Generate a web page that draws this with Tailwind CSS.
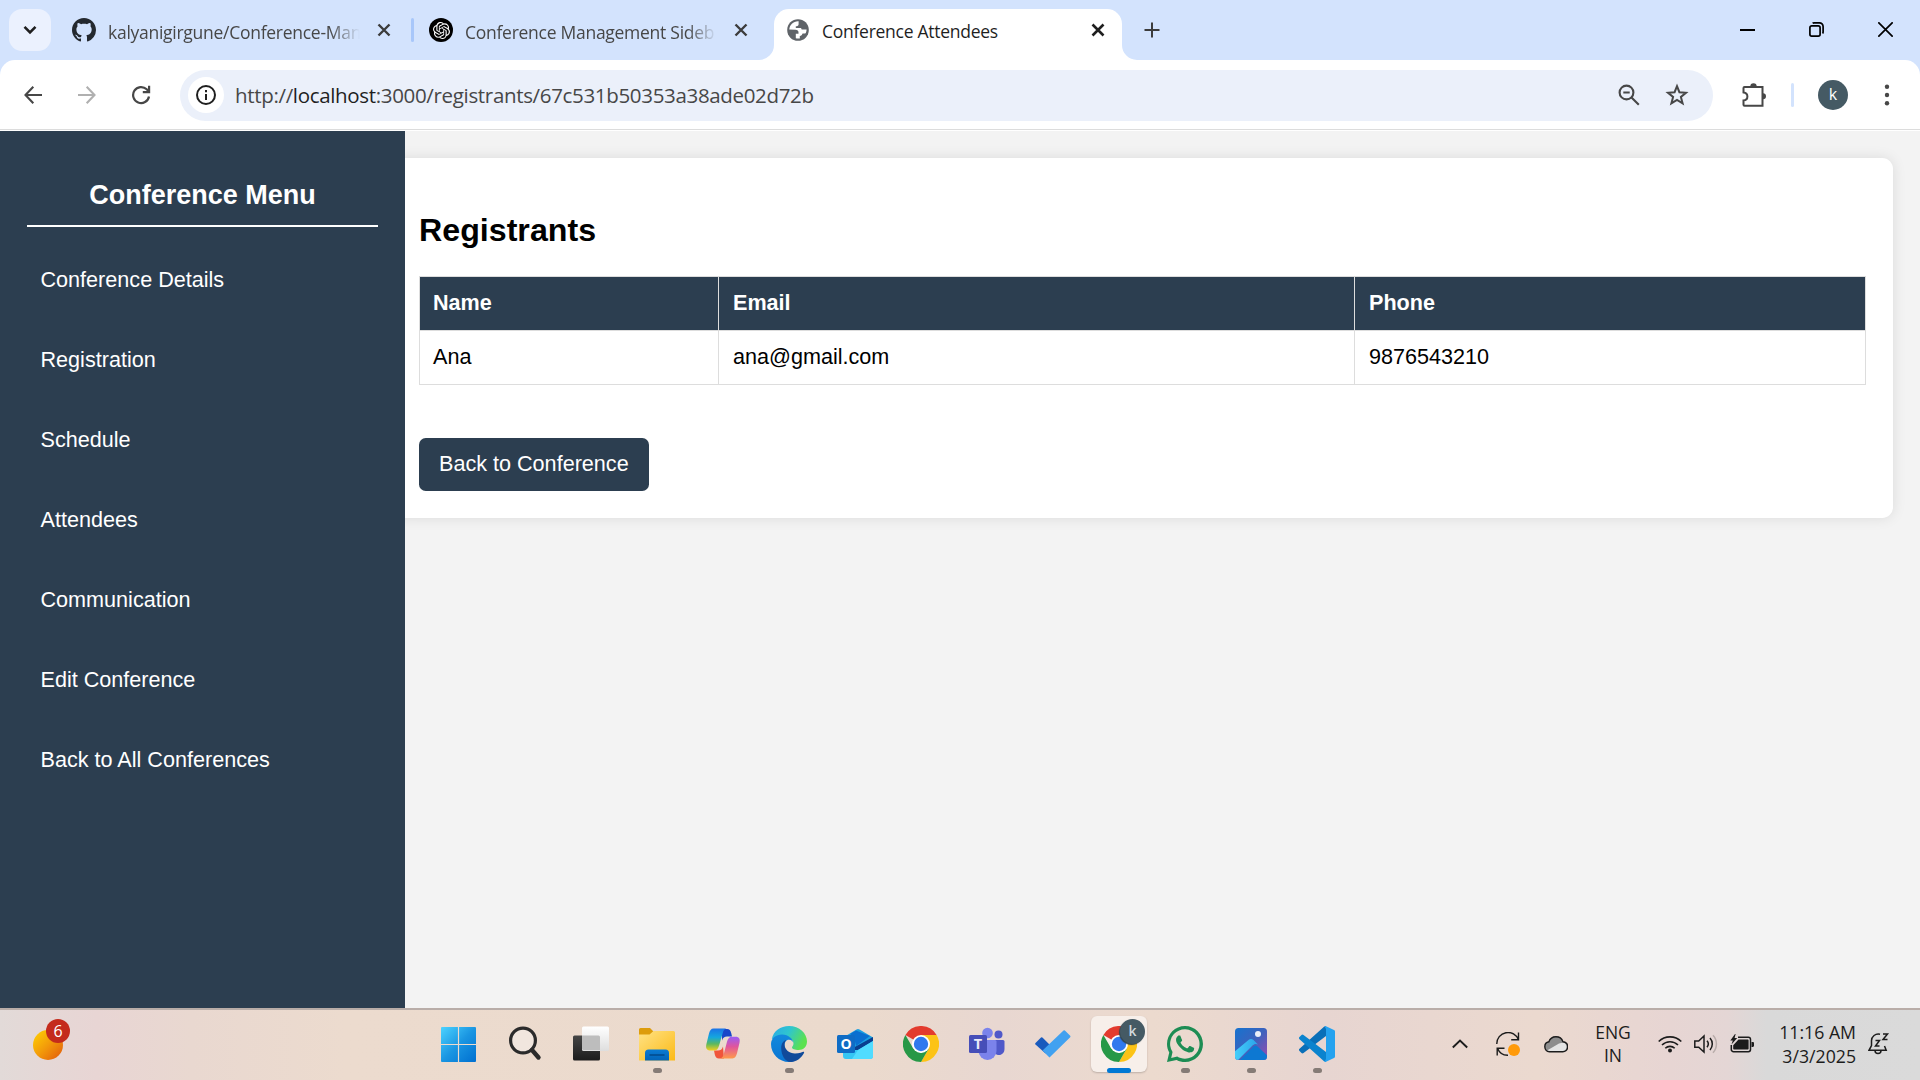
<!DOCTYPE html>
<html lang="en">
<head>
<meta charset="utf-8">
<title>Conference Attendees</title>
<script src="https://cdn.jsdelivr.net/npm/@tailwindcss/browser@4"></script>
</head>
<body class="w-[1920px] h-[1080px] overflow-hidden bg-[#f3f3f3] flex flex-col font-['Open_Sans',sans-serif]">

<!-- Tab strip -->
<header class="h-[60px] shrink-0 bg-[#d3e3fd] flex items-center pl-[9px] text-[17.500px] tracking-[-0.270px] text-[#474747]">
  <button class="w-[42px] h-[42px] rounded-[13px] bg-[#ebf1fe] grid place-items-center">
    <svg class="w-[14px] h-[10px]" viewBox="0 0 14 10" fill="none" stroke="#1f1f1f" stroke-width="2.6"><path d="M1.5 1.8 7 7.3l5.500-5.500"/></svg>
  </button>
  <svg class="w-6 h-6 ml-[21px]" viewBox="0 0 16 16" fill="#24292f"><path d="M8 0C3.580 0 0 3.580 0 8c0 3.540 2.290 6.530 5.470 7.590.4.070.550-.170.550-.380 0-.190-.010-.820-.010-1.490-2.010.370-2.530-.490-2.690-.940-.090-.230-.480-.940-.820-1.130-.280-.150-.680-.520-.010-.530.630-.010 1.080.580 1.230.820.720 1.210 1.870.870 2.330.660.070-.520.280-.870.510-1.070-1.780-.2-3.640-.890-3.640-3.950 0-.870.310-1.590.820-2.150-.080-.2-.360-1.020.080-2.120 0 0 .670-.210 2.200.820.640-.180 1.320-.270 2-.270s1.360.090 2 .270c1.530-1.040 2.200-.820 2.200-.820.440 1.100.160 1.920.080 2.120.510.560.820 1.270.820 2.150 0 3.070-1.870 3.750-3.650 3.950.290.250.540.730.540 1.480 0 1.070-.010 1.930-.010 2.200 0 .210.150.460.550.380A8.010 8.010 0 0 0 16 8c0-4.420-3.580-8-8-8z"/></svg>
  <span class="ml-3 w-[252px] h-[28px] leading-[28px] mt-[3px] overflow-hidden whitespace-nowrap mask-r-from-88% mask-r-to-100%">kalyanigirgune/Conference-Man</span>
  <svg class="w-[14px] h-[14px] ml-[17px]" viewBox="0 0 14 14" stroke="#3c3c3c" stroke-width="2.400"><path d="M1.500 1.500l11 11M12.500 1.500l-11 11"/></svg>
  <i class="w-[3px] h-6 ml-5 bg-[#a8c7fa] rounded-sm"></i>
  <span class="w-6 h-6 ml-[15px] rounded-full bg-black grid place-items-center">
    <svg class="w-[17px] h-[17px]" viewBox="0 0 24 24" fill="#fff"><path d="M22.2819 9.8211a5.9847 5.9847 0 0 0-.5157-4.9108 6.0462 6.0462 0 0 0-6.5098-2.9A6.0651 6.0651 0 0 0 4.9807 4.1818a5.9847 5.9847 0 0 0-3.9977 2.9 6.0462 6.0462 0 0 0 .7427 7.0966 5.98 5.98 0 0 0 .511 4.9107 6.051 6.051 0 0 0 6.5146 2.9001A5.9847 5.9847 0 0 0 13.2599 24a6.0557 6.0557 0 0 0 5.7718-4.2058 5.9894 5.9894 0 0 0 3.9977-2.9001 6.0557 6.0557 0 0 0-.7475-7.0729zm-9.022 12.6081a4.4755 4.4755 0 0 1-2.8764-1.0408l.1419-.0804 4.7783-2.7582a.7948.7948 0 0 0 .3927-.6813v-6.7369l2.02 1.1686a.071.071 0 0 1 .038.052v5.5826a4.504 4.504 0 0 1-4.4945 4.4944zm-9.6607-4.1254a4.4708 4.4708 0 0 1-.5346-3.0137l.142.0852 4.783 2.7582a.7712.7712 0 0 0 .7806 0l5.8428-3.3685v2.3324a.0804.0804 0 0 1-.0332.0615L9.74 19.9502a4.4992 4.4992 0 0 1-6.1408-1.6464zM2.3408 7.8956a4.485 4.485 0 0 1 2.3655-1.9728V11.6a.7664.7664 0 0 0 .3879.6765l5.8144 3.3543-2.0201 1.1685a.0757.0757 0 0 1-.071 0l-4.8303-2.7865A4.504 4.504 0 0 1 2.3408 7.872zm16.5963 3.8558L13.1038 8.364 15.1192 7.2a.0757.0757 0 0 1 .071 0l4.8303 2.7913a4.4944 4.4944 0 0 1-.6765 8.1042v-5.6772a.79.79 0 0 0-.407-.667zm2.0107-3.0231l-.142-.0852-4.7735-2.7818a.7759.7759 0 0 0-.7854 0L9.409 9.2297V6.8974a.0662.0662 0 0 1 .0284-.0615l4.8303-2.7866a4.4992 4.4992 0 0 1 6.6802 4.66zM8.3065 12.863l-2.02-1.1638a.0804.0804 0 0 1-.038-.0567V6.0742a4.4992 4.4992 0 0 1 7.3757-3.4537l-.142.0805L8.704 5.459a.7948.7948 0 0 0-.3927.6813zm1.0976-2.3654l2.602-1.4998 2.6069 1.4998v2.9994l-2.5974 1.4997-2.6067-1.4997Z"/></svg>
  </span>
  <span class="ml-3 w-[252px] h-[28px] leading-[28px] mt-[3px] overflow-hidden whitespace-nowrap mask-r-from-88% mask-r-to-100%">Conference Management Sideb</span>
  <svg class="w-[14px] h-[14px] ml-[17px]" viewBox="0 0 14 14" stroke="#3c3c3c" stroke-width="2.400"><path d="M1.500 1.500l11 11M12.500 1.500l-11 11"/></svg>
  <svg class="w-[15px] h-[15px] ml-[11px] self-end" viewBox="0 0 15 15" fill="#fff"><path d="M15 0v15H0A15 15 0 0 0 15 0z"/></svg>
  <div class="w-[348px] h-[51px] self-end bg-white rounded-t-[15px] flex items-center pl-3 pb-[9px] text-[#1f1f1f]">
    <svg class="w-6 h-6" viewBox="0 0 24 24"><circle cx="12" cy="12" r="10.800" fill="#5f6368"/><path fill="#fff" d="M12.600 3.300C7.500 3 3.500 6.900 3.300 11.600l6.200.1c1.900 0 3 1 3 2.700v1.300h-2.700v4.600c1 .3 2.700.4 4 .1v-2.500c1.500 0 2.300-.8 2.500-2.200 1-.3 1.800-.2 3.400-.5.6-1.300.9-2.500.9-3.600h-3.900c-1.200 0-1.500-.7-1.500-1.700H9.800V8.200c1.500.1 2.700-.5 2.800-2z"/></svg>
    <span class="ml-3 w-[262px] mt-[3px] whitespace-nowrap">Conference Attendees</span>
    <svg class="w-[14px] h-[14px] ml-[7px]" viewBox="0 0 14 14" stroke="#1f1f1f" stroke-width="2.600"><path d="M1.500 1.500l11 11M12.500 1.500l-11 11"/></svg>
  </div>
  <svg class="w-[15px] h-[15px] self-end" viewBox="0 0 15 15" fill="#fff"><path d="M0 0v15h15A15 15 0 0 1 0 0z"/></svg>
  <svg class="w-4 h-4 ml-[7px]" viewBox="0 0 16 16" stroke="#3c3c3c" stroke-width="2"><path d="M8 .5v15M.5 8h15"/></svg>
  <div class="ml-auto flex items-center gap-[54px] pr-[27px] pb-[1px]">
    <i class="w-[15px] h-[2px] bg-black"></i>
    <svg class="w-[15px] h-[15px]" viewBox="0 0 15 15" fill="none" stroke="#000" stroke-width="1.700"><rect x=".9" y="3.900" width="10.200" height="10.200" rx="1.800"/><path d="M3.600 1.300C4 1 4.500.9 5 .9h5.500a3.600 3.600 0 0 1 3.600 3.600V10c0 .5-.2 1-.5 1.400"/></svg>
    <svg class="w-[15px] h-[15px]" viewBox="0 0 15 15" stroke="#000" stroke-width="1.700"><path d="M.3.300l14.400 14.400M14.700.3L.3 14.700"/></svg>
  </div>
</header>

<!-- Toolbar -->
<div class="h-[71px] shrink-0 bg-[#d3e3fd]">
  <div class="h-full bg-white rounded-t-[15px] flex items-center pb-[1px] relative">
    <svg class="w-[18px] h-[18px] ml-6" viewBox="0 0 18 18" fill="none" stroke="#474747" stroke-width="2.100"><path d="M9.300.8 1.500 9l7.800 8.200M1.500 9H18"/></svg>
    <svg class="w-[18px] h-[18px] ml-9" viewBox="0 0 18 18" fill="none" stroke="#b0b0b0" stroke-width="2.100"><path d="M8.700.8 16.500 9l-7.800 8.200M16.500 9H0"/></svg>
    <svg class="w-[20px] h-[20px] ml-[35px]" viewBox="0 0 20 20" fill="none" stroke="#474747" stroke-width="2.200"><path d="M18 11.500A8 8 0 1 1 15.700 4.300L18 6.600M18.100.8v6.300h-6.300"/></svg>
    <div class="ml-[29px] w-[1533px] h-[51px] rounded-full bg-[#ebf0fa] flex items-center pl-2">
      <span class="w-9 h-9 rounded-full bg-white grid place-items-center">
        <svg class="w-5 h-5" viewBox="0 0 20 20" fill="none" stroke="#1f1f1f" stroke-width="2"><circle cx="10" cy="10" r="9"/><path d="M10 9v6M10 5v2.200"/></svg>
      </span>
      <span class="ml-[11px] text-[20.500px] tracking-[-0.330px] text-[#474747] whitespace-nowrap">http://<span class="text-[#1f1f1f]">localhost</span>:3000/registrants/67c531b50353a38ade02d72b</span>
      <svg class="w-[22px] h-[22px] ml-auto" viewBox="0 0 22 22" fill="none" stroke="#474747" stroke-width="2.100"><circle cx="8.500" cy="8.500" r="6.900"/><path d="M13.500 13.500l7.300 7.300M5.300 8.500h6.400"/></svg>
      <svg class="w-6 h-6 ml-[25px] mr-6" viewBox="0 0 24 24" fill="none" stroke="#474747" stroke-width="2"><path d="M12 3.200l2.400 6 6.600.5-5.100 4.200 1.700 6.500L12 16.900l-5.600 3.500 1.700-6.500L3 9.700l6.600-.5z"/></svg>
    </div>
    <svg class="w-[26px] h-[26px] ml-[28px]" viewBox="0 0 26 26" fill="none" stroke="#474747" stroke-width="2"><path d="M3.500 5h18v18.700h-18a1 1 0 0 1-1-1v-4.300c2.300-.2 3.900-1.700 3.900-4s-1.600-3.800-3.900-4V6a1 1 0 0 1 1-1z"/><path fill="#474747" stroke="none" d="M9.300 4.500a3.200 3.200 0 0 1 6.400 0zM22 11.300a3 3 0 0 1 0 6z"/></svg>
    <i class="w-[3px] h-6 ml-[24px] bg-[#d3e3fd] rounded-sm"></i>
    <span class="w-[30px] h-[30px] ml-6 rounded-full bg-[#455a64] text-white text-[16px] leading-[29px] text-center">k</span>
    <svg class="w-[6px] h-[22px] ml-9" viewBox="0 0 6 22" fill="#474747"><circle cx="3" cy="2.700" r="2.200"/><circle cx="3" cy="11" r="2.200"/><circle cx="3" cy="19.300" r="2.200"/></svg>
    <i class="absolute left-0 bottom-[1px] w-full h-[1px] bg-[#dcdcdc]"></i>
  </div>
</div>

<!-- Page -->
<div class="h-[877px] shrink-0 flex overflow-hidden font-['Liberation_Sans',Arial,sans-serif]">
  <aside class="w-[405px] shrink-0 bg-[#2c3e50] text-white px-[27px] relative z-10">
    <h2 class="mt-[46px] h-[50px] leading-[36px] border-b-2 border-white text-center text-[27px] font-bold">Conference Menu</h2>
    <nav class="mt-[13px] flex flex-col pl-[13.500px] text-[21.600px]">
      <a class="h-20 leading-[80px]">Conference Details</a>
      <a class="h-20 leading-[80px]">Registration</a>
      <a class="h-20 leading-[80px]">Schedule</a>
      <a class="h-20 leading-[80px]">Attendees</a>
      <a class="h-20 leading-[80px]">Communication</a>
      <a class="h-20 leading-[80px]">Edit Conference</a>
      <a class="h-20 leading-[80px]">Back to All Conferences</a>
    </nav>
  </aside>
  <main class="w-[1501px] h-[360px] -ml-[13px] mt-[27px] pl-[27px] bg-white rounded-[10.800px] shadow-[0_0_13.500px_rgba(0,0,0,0.1)]">
    <h2 class="mt-[54px] leading-[37px] text-[32.200px] font-bold text-black">Registrants</h2>
    <table class="mt-[27px] w-[1447px] table-fixed border-collapse text-[21.600px] text-black text-left">
      <colgroup><col class="w-[299px]"><col class="w-[636px]"><col></colgroup>
      <tr class="h-[54px] bg-[#2c3e50] text-white">
        <th class="border border-[#ddd] px-[13px]">Name</th><th class="border border-[#ddd] px-[14px]">Email</th><th class="border border-[#ddd] px-[14px]">Phone</th>
      </tr>
      <tr class="h-[54px]">
        <td class="border border-[#ddd] px-[13px]">Ana</td><td class="border border-[#ddd] px-[14px]">ana@gmail.com</td><td class="border border-[#ddd] px-[14px]">9876543210</td>
      </tr>
    </table>
    <a class="mt-[53px] inline-block h-[53px] leading-[51px] px-[20px] rounded-[6.750px] bg-[#2c3e50] text-white text-[21.600px]">Back to Conference</a>
  </main>
</div>

<!-- Taskbar -->
<footer class="h-[72px] shrink-0 border-t-2 border-[#b9ada8] flex items-center text-[#1c1c1c] bg-[linear-gradient(90deg,#e2dad8_0%,#e8d5d4_5%,#e9d8d0_10%,#ecdbce_18%,#ebdacd_45%,#e8d7d1_52%,#ecdace_60%,#e7d5d1_69%,#ebd9cf_80%,#e7d5d3_87%,#e4d6d5_90%,#d9d9d9_92%,#dadada_100%)]">
  <div class="w-[41px] h-[44px] ml-[33px] -mt-[15px] relative">
    <i class="absolute left-0 top-[14px] w-[30px] h-[30px] rounded-full bg-linear-135 from-[#ffd400] via-[#f29a0a] to-[#e0540c]"></i>
    <b class="absolute left-[13px] top-[3px] w-6 h-6 rounded-full bg-[#c42b1c] text-white text-[16px] font-normal leading-[24px] text-center">6</b>
  </div>
  <div class="ml-[352px] flex h-[70px]">
    <div class="w-[66px] flex items-center justify-center pb-[1px] pr-[2px]">
      <svg class="w-[35px] h-[35px]" viewBox="0 0 36 36"><defs><linearGradient id="win" x1="0" y1="0" x2="1" y2="1"><stop offset="0" stop-color="#4cd3ff"/><stop offset=".5" stop-color="#1a96e2"/><stop offset="1" stop-color="#006fd0"/></linearGradient></defs><path fill="url(#win)" d="M1 0h16.400v17.400H0V1a1 1 0 0 1 1-1zM18.600 0H35a1 1 0 0 1 1 1v16.400H18.600zM0 18.600h17.400V36H1a1 1 0 0 1-1-1zM18.600 18.600H36V35a1 1 0 0 1-1 1H18.600z"/></svg>
    </div>
    <div class="w-[66px] flex items-center justify-center pb-[2px] pr-[2px]">
      <svg class="w-9 h-9" viewBox="0 0 36 36" fill="#f1e6de" stroke="#2b2b2b"><circle cx="17" cy="14.500" r="12.400" stroke-width="3.200"/><path d="M26 24l6.500 7.500" stroke-width="4.400" stroke-linecap="round"/></svg>
    </div>
    <div class="w-[66px] flex items-center justify-center pb-[2px]">
      <svg class="w-9 h-9" viewBox="0 0 36 36"><defs><linearGradient id="tv" x2="0" y2="1"><stop stop-color="#454545"/><stop offset="1" stop-color="#1c1c1c"/></linearGradient><linearGradient id="tw" x2="0" y2="1"><stop stop-color="#fff"/><stop offset="1" stop-color="#dedede"/></linearGradient></defs><rect y="9.500" width="27" height="25" rx="1.500" fill="url(#tv)"/><rect x="9" y=".5" width="27" height="24.500" rx="1.500" fill="url(#tw)"/><path d="M9 9.500h16.500a1.500 1.500 0 0 1 1.500 1.500v13H10.500A1.500 1.500 0 0 1 9 22.500z" fill="#bdbdbd"/></svg>
    </div>
    <div class="w-[66px] flex flex-col items-center pt-[17px]">
      <svg class="w-9 h-9" viewBox="0 0 36 36"><defs><linearGradient id="fe" x2="1" y2="1"><stop stop-color="#ffe285"/><stop offset="1" stop-color="#fcba16"/></linearGradient><linearGradient id="fb" x2="0" y2="1"><stop stop-color="#0b7bd3"/><stop offset="1" stop-color="#0364b8"/></linearGradient></defs><path fill="#dd9c0b" d="M0 2.500A1.500 1.500 0 0 1 1.500 1H11l3.500 3.500L11 9H0z"/><path fill="url(#fe)" d="M0 7.500h10.500l4-3.500H34.500A1.500 1.500 0 0 1 36 5.500V33.500H0z"/><path fill="url(#fb)" d="M6 33.500V26a3.500 3.500 0 0 1 3.500-3.500h17A3.500 3.500 0 0 1 30 26v7.500z"/><path stroke="#034c8f" stroke-width="1.600" d="M10.500 28h15"/></svg>
      <i class="mt-[5px] w-[9px] h-[5px] rounded-full bg-[#857b76]"></i>
    </div>
    <div class="w-[66px] flex items-center justify-center pb-[2px]">
      <svg class="w-9 h-9" viewBox="0 0 36 36"><defs><linearGradient id="c1" x2="0" y2="1"><stop stop-color="#1b72e8"/><stop offset=".4" stop-color="#14a7de"/><stop offset=".7" stop-color="#5cb85f"/><stop offset="1" stop-color="#f3cf1d"/></linearGradient><linearGradient id="c2" x2="0" y2="1"><stop stop-color="#9a5cf5"/><stop offset=".45" stop-color="#e0559c"/><stop offset="1" stop-color="#ff9a4a"/></linearGradient></defs><path fill="#1846c9" d="M17 3h5c2.500 0 3.500 1.500 4.200 4l.8 3.500h-5c-2.500 0-4 1-5 4z"/><path fill="#f0553b" d="M19 32.500h-5c-2.500 0-3.500-1.500-4.200-4L9 24.500h4c2.500 0 4-1 5-4z"/><path fill="url(#c1)" d="M8.500 2.500h12.800c-2.300.5-3 2.500-3.800 5.200l-3.400 11.800c-.9 3-2 5-5 5H5.500C1.500 24.500.600 22 1.300 18.500L4 7.500C4.800 4.500 6 2.500 8.500 2.500z"/><path fill="url(#c2)" d="M27.500 32.500H15.200c2.300-.5 3-2.500 3.800-5.200l3-11.500c.9-3 2-5 5-5h3.500c4 0 4.700 2.500 4 6l-2.500 10.500c-.800 3-2 5.200-4.500 5.200z"/></svg>
    </div>
    <div class="w-[66px] flex flex-col items-center pt-4">
      <svg class="w-9 h-9" viewBox="0 0 36 36"><defs><linearGradient id="e1" x2="1" y2=".4"><stop stop-color="#29a9e8"/><stop offset=".5" stop-color="#2fc5cf"/><stop offset="1" stop-color="#5ce14f"/></linearGradient><linearGradient id="e2" x2="0" y2="1"><stop stop-color="#1389dd"/><stop offset="1" stop-color="#0a75d2"/></linearGradient></defs><path fill="url(#e1)" d="M.8 13C2.500 5 9.500 0 18 0c10.500 0 18 7.500 18 15.500 0 5-3.500 8.500-8.500 8.500-3.500 0-6.500-1-6.500-2.500 0-1 1.500-1.500 1.500-4 0-4-4-6.500-8-7.500z"/><path fill="url(#e2)" d="M0 18C.2 12 5 8.500 11 8.500c6.500 0 11.500 4.500 11.500 9.500 0-2.500-2-4.200-4.500-4.200-3 0-4.500 2.700-4.500 6.200 0 6 4 13.500 9.500 15.200-1.500.5-3.500.8-5 .8C8 36 0 28 0 18z"/><path fill="#114a9a" d="M10.200 22c0-4 2-7.500 5-8-1.500 1.500-1.700 3.500-1.700 4.500 0 5 5 9 10.500 9 4.500 0 7.500-1.600 8.500-1.700.6 0 .8.500.5 1.200C30.500 32 25 36 20 36c-6 0-9.800-7-9.800-14z"/></svg>
      <i class="mt-[6px] w-[9px] h-[5px] rounded-full bg-[#857b76]"></i>
    </div>
    <div class="w-[66px] flex items-center justify-center pb-[2px]">
      <svg class="w-9 h-9" viewBox="0 0 36 36"><path fill="#1a9fe0" d="M7 11 19.500 3.500a3 3 0 0 1 3 0L36 11.500 20 23H7z"/><path fill="#0a6fd0" d="M13 8l6-3.500L33 10l-14 10-2-9z"/><path fill="#0a3f8f" d="M16 22 36 11v5L20 26z"/><path fill="#35c6f4" d="M36 15v15a3 3 0 0 1-3 3H9a3 3 0 0 1-3-3v-6h15z"/><path fill="#51dcff" d="M21 24l15-9v15a3 3 0 0 1-3 3H15z"/><rect y="9" width="18" height="18" rx="1.500" fill="#0f6cc5"/><text x="9" y="23" text-anchor="middle" font-size="14" font-weight="700" fill="#fff">O</text></svg>
    </div>
    <div class="w-[66px] flex items-center justify-center pb-[2px]">
      <svg class="w-9 h-9" viewBox="0 0 36 36"><g id="chrome"><path fill="#e33b2e" d="M18 18 2.400 9A18 18 0 0 1 33.600 9z"/><path fill="#fcc316" d="M18 9h15.600A18 18 0 0 1 18 36l7.800-13.500z"/><path fill="#279847" d="M2.400 9l7.800 13.500 7.800 4.500 7.800-4.500L18 36A18 18 0 0 1 2.400 9z"/><circle cx="18" cy="18" r="9" fill="#fff"/><circle cx="18" cy="18" r="7.200" fill="#3079ee"/></g></svg>
    </div>
    <div class="w-[66px] flex items-center justify-center pb-[2px]">
      <svg class="w-9 h-9" viewBox="0 0 36 36"><circle cx="29.500" cy="8.500" r="4" fill="#5059c9"/><path fill="#5059c9" d="M24 14h10a1.500 1.500 0 0 1 1.500 1.500V23c0 3.500-2.500 6-5.500 6-3.500 0-6-2.500-6-6z"/><circle cx="18.500" cy="7" r="5.300" fill="#7b83eb"/><path fill="#7b83eb" d="M11 14h15a1.500 1.500 0 0 1 1.500 1.500v9.500a9 9 0 0 1-18 0v-9.500A1.500 1.500 0 0 1 11 14z"/><rect y="9" width="18" height="18" rx="1.500" fill="#464eb8"/><text x="9" y="23.200" text-anchor="middle" font-size="14.500" font-weight="700" fill="#e9eaf8">T</text></svg>
    </div>
    <div class="w-[66px] flex items-center justify-center pb-[2px]">
      <svg class="w-9 h-9" viewBox="0 0 36 36"><path fill="#195abd" d="M.5 17 6 11.500a1 1 0 0 1 1.400 0L16 20l-5.500 7.500L.5 18.400a1 1 0 0 1 0-1.400z"/><path fill="#41a1f0" d="M28.500 4.500a1 1 0 0 1 1.400 0l5.300 5.300a1 1 0 0 1 0 1.400L14.500 31.500 7.500 24.500z"/></svg>
    </div>
    <div class="w-[66px] h-full flex justify-center">
      <div class="w-14 h-14 mt-[6px] rounded-md bg-[#f7efea] shadow-[0_1px_2px_rgba(0,0,0,0.2)] flex flex-col items-center pt-[10px] relative">
        <svg class="w-9 h-9 shrink-0" viewBox="0 0 36 36"><use href="#chrome"/></svg>
        <i class="mt-[6px] w-6 h-[5px] shrink-0 rounded-full bg-[#0078d4]"></i>
        <b class="absolute left-[29px] top-[3px] w-[25px] h-[25px] rounded-full bg-[#455a64] shadow-[-1px_1px_1px_#34454d] text-[#d3dade] text-[14px] font-semibold leading-[24px] text-center">k</b>
      </div>
    </div>
    <div class="w-[66px] flex flex-col items-center pt-4">
      <svg class="w-9 h-9" viewBox="0 0 24 24" fill="#1d8d54"><path d="M17.472 14.382c-.297-.149-1.758-.867-2.030-.967-.273-.099-.471-.148-.670.150-.197.297-.767.966-.940 1.164-.173.199-.347.223-.644.075-.297-.150-1.255-.463-2.390-1.475-.883-.788-1.480-1.761-1.653-2.059-.173-.297-.018-.458.130-.606.134-.133.298-.347.446-.520.149-.174.198-.298.298-.497.099-.198.050-.371-.025-.520-.075-.149-.669-1.612-.916-2.207-.242-.579-.487-.500-.669-.510-.173-.008-.371-.010-.570-.010-.198 0-.520.074-.792.372-.272.297-1.040 1.016-1.040 2.479 0 1.462 1.065 2.875 1.213 3.074.149.198 2.096 3.200 5.077 4.487.709.306 1.262.489 1.694.625.712.227 1.360.195 1.871.118.571-.085 1.758-.719 2.006-1.413.248-.694.248-1.289.173-1.413-.074-.124-.272-.198-.570-.347zM12 0C5.400 0 0 5.400 0 12c0 2.100.500 4 1.500 5.700L0 24l6.400-1.400C8.100 23.500 10 24 12 24c6.600 0 12-5.400 12-12S18.600 0 12 0zm0 21.800c-1.900 0-3.700-.500-5.200-1.400l-4 .9.900-3.900A9.800 9.800 0 1 1 12 21.800z"/></svg>
      <i class="mt-[6px] w-[9px] h-[5px] rounded-full bg-[#857b76]"></i>
    </div>
    <div class="w-[66px] flex flex-col items-center pt-4">
      <svg class="w-9 h-9" viewBox="0 0 36 36"><defs><linearGradient id="p1" x2="1" y2="1"><stop stop-color="#1673cf"/><stop offset=".5" stop-color="#3d62bd"/><stop offset="1" stop-color="#9b4bb0"/></linearGradient><linearGradient id="p2" x2="1"><stop stop-color="#47d2fb"/><stop offset="1" stop-color="#2aa3ea"/></linearGradient><clipPath id="pc"><rect x="2" y="2" width="32" height="32" rx="3.500"/></clipPath></defs><g clip-path="url(#pc)"><path fill="url(#p1)" d="M2 2h32v32H2z"/><path fill="#0d78d2" d="M5 36 21 20a3 3 0 0 1 3 0l12 11v5z"/><path fill="url(#p2)" d="M0 27 15.500 14a4 4 0 0 1 5 0l4.500 4.500c-2-1-4-.5-5.500 1L5 34H0z"/></g><circle cx="25" cy="8" r="3" fill="#e9eef8"/></svg>
      <i class="mt-[6px] w-[9px] h-[5px] rounded-full bg-[#857b76]"></i>
    </div>
    <div class="w-[66px] flex flex-col items-center pt-4">
      <svg class="w-9 h-9" viewBox="0 0 36 36"><path fill="#0a6fb8" d="M27 0v10L4.500 27a1.500 1.500 0 0 1-2 0L.5 25a1.500 1.500 0 0 1 0-2.200L25 .8z"/><path fill="#0b83ce" d="M27 36V26L4.500 9a1.500 1.500 0 0 0-2 0L.5 11a1.500 1.500 0 0 0 0 2.200L25 35.200z"/><path fill="#25a2ef" d="M25.500 35.700 27 33V3L25.500.300a1.500 1.500 0 0 1 1.500 0L35 4a1.500 1.500 0 0 1 1 1.400v25.200a1.500 1.500 0 0 1-1 1.400l-8 3.700a1.500 1.500 0 0 1-1.500 0z"/></svg>
      <i class="mt-[6px] w-[9px] h-[5px] rounded-full bg-[#857b76]"></i>
    </div>
  </div>

  <div class="ml-[102px] flex items-center h-[70px] pb-[2px]">
    <svg class="w-4 h-[10px]" viewBox="0 0 16 10" fill="none" stroke="#1c1c1c" stroke-width="1.900"><path d="M.8 8.500 8 1.500l7.200 7"/></svg>
    <svg class="w-6 h-6 ml-7" viewBox="0 0 24 24" fill="none" stroke="#1c1c1c" stroke-width="1.400"><path d="M.8 12A11.200 11.200 0 0 1 22.500 7.800M22.500.5v7.300h-7.300M12 23.200A11 11 0 0 1 1.500 16.200M1.200 23.500v-7.300h7.300"/><circle cx="18" cy="18" r="6" fill="#ff9a0a" stroke="none"/></svg>
    <svg class="w-6 h-[18px] ml-6" viewBox="0 0 24 18"><path fill="#8d8d8d" d="M5.500 16.500a5 5 0 0 1-.6-9.900A7.500 7.500 0 0 1 19 6.500a5 5 0 0 1-.5 10z"/><path fill="#e4e4e4" d="M3 15.500 15 8.500l4.500-1a4.700 4.700 0 0 1-1 9h-13z"/><path fill="none" stroke="#1c1c1c" stroke-width="1.400" d="M5.500 16.700a5 5 0 0 1-.6-9.900A7.500 7.500 0 0 1 19 6.700a5 5 0 0 1-.5 10z"/></svg>
    <div class="ml-[27px] w-9 text-center text-[17.500px] leading-[23px]">ENG<br>IN</div>
    <svg class="w-6 h-[18px] ml-[27px]" viewBox="0 0 24 18" fill="none" stroke="#1c1c1c" stroke-width="1.600"><path d="M.7 6.500a16 16 0 0 1 22.600 0M4 10a11.300 11.300 0 0 1 16 0M7.300 13.300a6.600 6.600 0 0 1 9.400 0"/><circle cx="12" cy="15.500" r="2" fill="#1c1c1c" stroke="none"/></svg>
    <svg class="w-6 h-5 ml-3" viewBox="0 0 24 20" fill="none" stroke="#1c1c1c" stroke-width="1.500"><path d="M.8 7v6.200h3.900L10 18V2L4.700 7zM13 6.800a5 5 0 0 1 0 6.400M16 4a9 9 0 0 1 0 12"/><path stroke="#b9adab" d="M19 1.200a13 13 0 0 1 0 17.600"/></svg>
    <svg class="w-6 h-5 ml-3" viewBox="0 0 24 20"><path fill="none" stroke="#1c1c1c" stroke-width="1.500" d="M8 3.300h10.300A2.200 2.200 0 0 1 20.500 5.500v10a2.200 2.200 0 0 1-2.200 2.200H3.500A2.200 2.200 0 0 1 1.300 15.500V11"/><path fill="#1c1c1c" d="M8.500 5.500h9.300c.5 0 .8.300.8.800v8.400c0 .5-.3.800-.8.800H4c-.5 0-.8-.3-.8-.8v-3.500zM21.500 8h1.300c.7 0 1.200.6 1.200 1.200v2.600c0 .6-.5 1.200-1.200 1.200h-1.300zM5 0 .3 6.500h2.500L1.500 10.500 7.200 4H4.600l1-4z"/></svg>
    <div class="ml-6 w-[78px] text-right text-[17.700px] leading-[24px] whitespace-nowrap">11:16 AM<br>3/3/2025</div>
    <svg class="w-[22px] h-[22px] ml-3" viewBox="0 0 22 22" fill="none" stroke="#1c1c1c" stroke-width="1.500"><path d="M12 1.200A6.800 6.800 0 0 0 3.500 8v4.500L1 17.300h17.200L16.500 13M7 17.500a3 3 0 0 0 6 0M7.500 7.500h4l-4 5.500h4M15 1h4.500L15 6.500h4.500"/></svg>
  </div>
</footer>
</body>
</html>
